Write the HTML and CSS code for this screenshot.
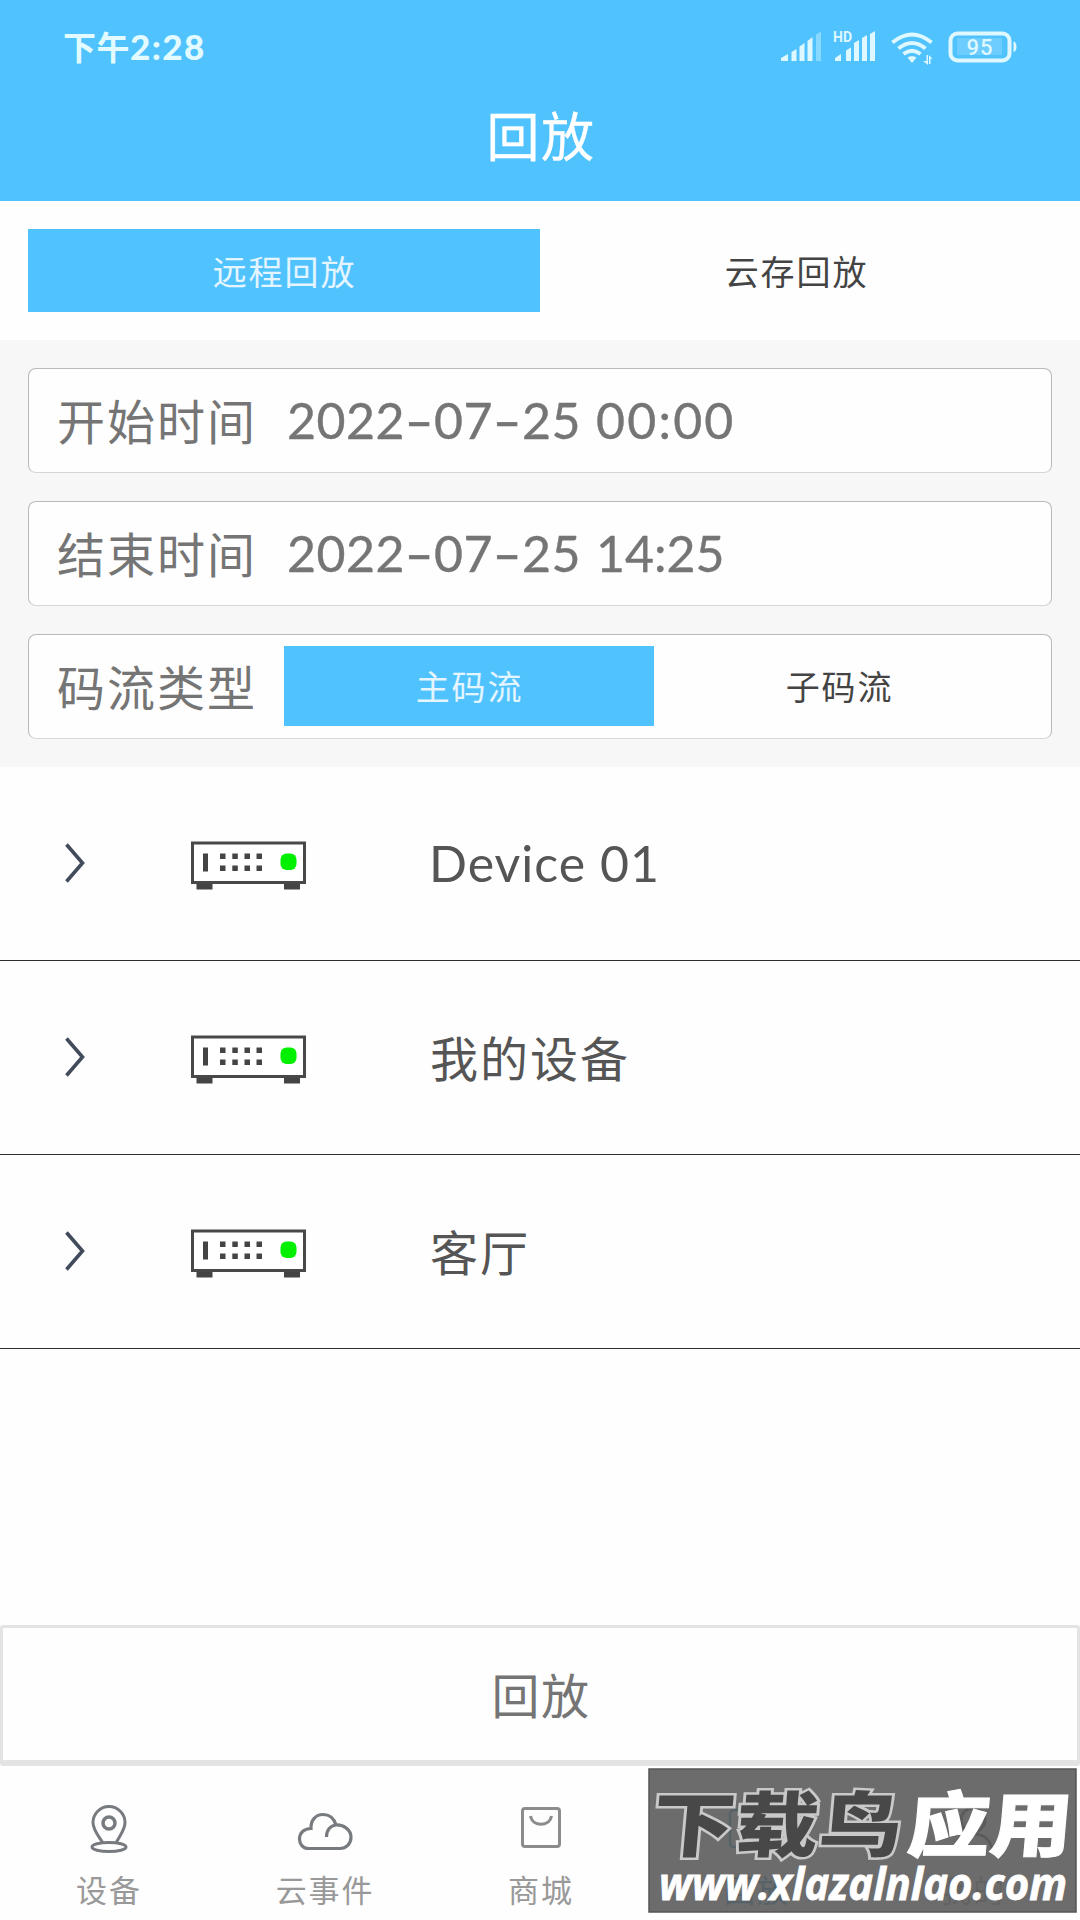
FILE: index.html
```html
<!DOCTYPE html>
<html lang="zh-CN">
<head>
<meta charset="utf-8">
<title>回放</title>
<link rel="stylesheet" href="styles.css">
</head>
<body>
<svg width="0" height="0" class="defs">
  <symbol id="chevron" viewBox="0 0 20 40"><path d="M1.500 1.500L17.500 20L1.500 38.500" fill="none" stroke="#414b5c" stroke-width="3.600"/></symbol>
  <symbol id="recorder" viewBox="0 0 116 50">
    <path d="M5.500 42h16v6.500h-16zM93 42h16v6.500h-16z" fill="#444"/>
    <rect x="1.500" y="2" width="112" height="39.500" fill="#fff" stroke="#484848" stroke-width="3"/>
    <path d="M12 12.500h5v18h-5zM29 12.500h5.500v5.500h-5.500zM41.300 12.500h5.500v5.500h-5.500zM53.500 12.500h5.500v5.500h-5.500zM65.500 12.500h5.500v5.500h-5.500zM29 24.500h5.500v5.500h-5.500zM41.300 24.500h5.500v5.500h-5.500zM53.500 24.500h5.500v5.500h-5.500zM65.500 24.500h5.500v5.500h-5.500z" fill="#444"/>
    <rect x="89.500" y="12.500" width="16" height="16.500" rx="6" fill="#00f000"/>
  </symbol>
</svg>
<div class="app">
  <header class="header">
    <div class="status">
      <span class="clock">下午<b>2:28</b></span>
      <svg class="status-icons" viewBox="780 28 240 40" width="240" height="40">
        <g fill="#dff7ff">
          <path d="M781 61v-3l7-4v7zM791.500 61V52l5-3v12zM799.500 61V46.500l5-3.500v18zM807.500 61V41l5-4v24z"/>
          <path d="M816 61V34.500l5-3V61z" opacity=".4"/>
          <path d="M835 61v-3l6-4v7zM846 61V50.500l5-3v13.500zM854 61V43l5-3v21zM862 61V38l5-3v26zM870 61V34l5-3v30z"/>
          <text x="833" y="42" class="hd">HD</text>
          <path d="M907.500 57.500l4.500 5.500 4.500-5.500q-4.500-3-9 0z"/>
          <path d="M923 61h3.500v-6h1.500v10zM932.500 59h-2v5h-1.500V55z"/>
          <path d="M1013.500 41.500c4 0 4 10.500 0 10.500z"/>
          <rect x="957" y="38" width="45" height="17" opacity=".2"/>
          <text x="980" y="55.300" class="level">95</text>
        </g>
        <g fill="none" stroke="#dff7ff">
          <path d="M892.500 42.500q19.500-16 39 0M898.500 48.500q13.500-11 27 0M903.500 54q8.500-6.500 17 0" stroke-width="4"/>
          <rect x="950.500" y="33.500" width="59" height="27" rx="7" stroke-width="4"/>
        </g>
      </svg>
    </div>
    <h1 class="title">回放</h1>
  </header>

  <div class="tabs">
    <div class="tab active">远程回放</div>
    <div class="tab">云存回放</div>
  </div>

  <section class="filters">
    <div class="field"><span class="label">开始时间</span><span class="value">2022<i>-</i>07<i>-</i>25</span><span class="time wide">00:00</span></div>
    <div class="field"><span class="label">结束时间</span><span class="value">2022<i>-</i>07<i>-</i>25</span><span class="time">14:25</span></div>
    <div class="field"><span class="label">码流类型</span>
      <div class="stream"><div class="tab active">主码流</div><div class="tab">子码流</div></div>
    </div>
  </section>

  <ul class="devices">
    <li><svg class="chevron"><use href="#chevron"/></svg><svg class="recorder"><use href="#recorder"/></svg><span class="latin">Device 01</span></li>
    <li><svg class="chevron"><use href="#chevron"/></svg><svg class="recorder"><use href="#recorder"/></svg><span>我的设备</span></li>
    <li><svg class="chevron"><use href="#chevron"/></svg><svg class="recorder"><use href="#recorder"/></svg><span>客厅</span></li>
  </ul>

  <div class="play">回放</div>

  <nav class="nav">
    <div class="item">
      <svg viewBox="0 0 60 50"><g fill="none" stroke="#777b80" stroke-width="3"><path d="M24 38C19 30 14 25 14 17.500a16 16 0 0 1 32 0C46 25 41 30 37 38"/><circle cx="30" cy="18" r="6" stroke-width="3.500"/><ellipse cx="30" cy="42" rx="17" ry="4.500"/></g></svg>
      <span>设备</span>
    </div>
    <div class="item">
      <svg viewBox="0 0 60 50"><path d="M13.500 43.500C7 43.500 4.500 38 4.500 34c0-5.500 4-10.500 11.500-10.500C15.500 15 21 9.500 28 9.500c6.500 0 11 4 13 10.500 8-.5 15 5 15 12s-5 11.500-11 11.500zM41 20c-5.500.5-9.500 5-9.500 12" fill="none" stroke="#777b80" stroke-width="3.200"/></svg>
      <span>云事件</span>
    </div>
    <div class="item">
      <svg viewBox="0 0 60 50"><g fill="none" stroke="#8c8c8c" stroke-width="3"><rect x="11.500" y="3.500" width="37" height="38" rx="2.500"/><path d="M19.500 11c2 11 19 11 21 0"/></g></svg>
      <span>商城</span>
    </div>
    <div class="item current">
      <svg viewBox="0 0 60 50"><g fill="none" stroke="#0090c8" stroke-width="2.500"><rect x="3" y="5" width="42" height="37" rx="4"/><path d="M45 18l11-7v25l-11-7M18 16v15l13-7.500z"/></g></svg>
      <span>回放</span>
    </div>
    <div class="item">
      <svg viewBox="0 0 60 50"><g fill="none" stroke="#444" stroke-width="3"><circle cx="30" cy="15" r="12"/><path d="M11 46c1-12 9-17 19-17s18 5 19 17"/></g></svg>
      <span>我的</span>
    </div>
  </nav>

  <svg class="watermark" viewBox="0 0 429 145">
    <rect x="1" y="1" width="427" height="143" class="plate"/>
    <g transform="translate(6 83) skewX(-5) scale(1.160 1)" class="brand">
      <text x="-3" y="0" class="dark">下载鸟</text>
      <text x="217" y="0" class="light">应用</text>
    </g>
    <text x="11" y="131.500" class="site" textLength="408" lengthAdjust="spacingAndGlyphs">www.xlazalnlao.com</text>
  </svg>
</div>
</body>
</html>
```
FILE: styles.css
```css
* { box-sizing: border-box; }
body { margin: 0; background: #fff; font-family: Lato, "Noto Sans CJK SC", sans-serif; }
.defs { position: absolute; }
.app { position: relative; width: 1080px; height: 1920px; overflow: hidden; display: flex; flex-direction: column; background: #fefefe; }

.header { height: 201px; background: #50c3ff; color: #fff; }
.status { height: 96px; padding: 0 60px 0 63px; display: flex; justify-content: space-between; align-items: center; }
.clock { font-size: 33px; font-weight: 700; line-height: 40px; padding-bottom: 3px; letter-spacing: .500px; color: #e3fbff; }
.clock b { font-size: 35px; letter-spacing: 1.400px; }
.hd { font: 700 14px Roboto, sans-serif; }
.level { font: 500 22px Roboto, sans-serif; text-anchor: middle; letter-spacing: 1px; }
.title { margin: 0; height: 82px; padding-left: 2px; line-height: 82px; text-align: center; font-size: 53px; font-weight: 400; letter-spacing: 1.500px; -webkit-text-stroke: .300px; }

.tabs { height: 139px; padding: 28px; display: flex; }
.tab { flex: 1; padding: 0 0 1px 1px; display: flex; align-items: center; justify-content: center; font-size: 34px; letter-spacing: 1.900px; color: #444; -webkit-text-stroke: 0; }
.tab.active { background: #50c3ff; color: #e4f5ff; }

.filters { height: 427px; padding: 28px; display: flex; flex-direction: column; gap: 28px; background: #f7f7f7; }
.field { height: 105px; padding: 0 27px 2px 28px; display: flex; align-items: center; background: #fefefe; border: 1px solid #bababa; border-bottom-color: #d6d6d6; border-radius: 8px; color: #757575; }
.label { width: 227px; padding-bottom: 2px; font-size: 48px; letter-spacing: 2px; white-space: nowrap; }
.value, .time { font-size: 50px; padding-top: 1px; white-space: pre; -webkit-text-stroke: .400px; }
.value { margin-left: 3px; letter-spacing: .500px; }
.value i { display: inline-block; width: 29px; text-align: center; font-style: normal; transform: scaleX(1.600); }
.time { margin-left: 15px; }
.time.wide { letter-spacing: 2.200px; }
.stream { flex: 1; height: 80px; display: flex; }

.devices { margin: 0; padding: 0; list-style: none; flex: 1; }
.devices li { height: 194px; padding-left: 65px; display: flex; align-items: center; border-bottom: 1px solid #2e2e2e; font-size: 48px; letter-spacing: 2px; color: #555; }
.devices span { padding-bottom: 4px; }
.chevron { width: 20px; height: 40px; margin: 0 106px 2px 0; }
.recorder { width: 116px; height: 50px; margin: 4px 123px 0 0; }
.devices .latin { padding-bottom: 2px; margin-left: -1px; font-size: 50px; letter-spacing: 1px; }

.play { height: 141px; padding: 0 0 3px 2px; border: solid #e3e3e3; border-width: 3px 3px 6px; border-radius: 3px; display: flex; align-items: center; justify-content: center; font-size: 48px; letter-spacing: 1.500px; color: #757575; }

.nav { height: 154px; display: flex; }
.item { flex: 1; padding-top: 39px; display: flex; flex-direction: column; align-items: center; color: #999; }
.item svg { width: 60px; height: 50px; margin-left: 1px; }
.item span { margin-top: 13px; padding-left: 2px; line-height: 44px; font-size: 31px; letter-spacing: 1.900px; }
.item.current { color: #0090c8; }

.watermark { position: absolute; left: 648px; top: 1768px; width: 429px; height: 145px; overflow: visible; }
.plate { fill: #5d5d5d; fill-opacity: .91; stroke: #555; stroke-width: 1.500; }
.brand { font: 900 71px "Noto Sans CJK SC", sans-serif; }
.dark { fill: #484848; stroke: #c9c9c9; stroke-width: 5; paint-order: stroke; letter-spacing: 1px; }
.light { fill: #fff; stroke: #fff; stroke-width: 1; }
.site { font: italic 700 44px "Open Sans", sans-serif; fill: #fff; stroke: #fff; stroke-width: .800; }
```
